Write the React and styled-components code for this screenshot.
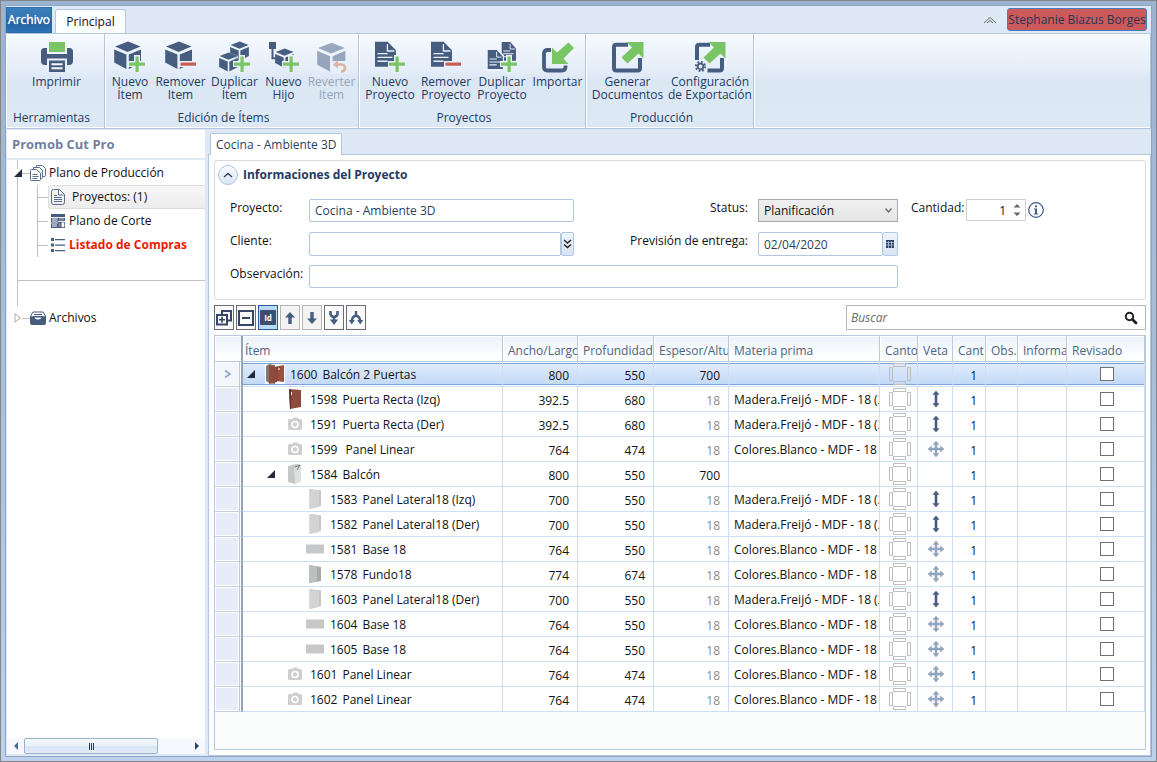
import React, { useState } from "react";
import styled, { createGlobalStyle, css } from "styled-components";

const NAVY = "#475d80";
const GREEN = "#79c464";
const RED = "#c95b57";

/* ---------- icons ---------- */

const Plus = () => (
    <g>
        <path d="M20 14h6v6h6v6h-6v6h-6v-6h-6v-6h6z" fill="#eaf1fa" />
        <path d="M21.5 15.500h3.200v6h6.300v3.200h-6.300v6.300h-3.200v-6.300h-6.500v-3.200h6.500z" fill={GREEN} />
    </g>
);

const Minus = () => (
    <g>
        <path d="M14 20h18v6h-18z" fill="#eaf1fa" />
        <path d="M15.500 21.500h15.500v3.200h-15.500z" fill={RED} />
    </g>
);

const Cube = (props) => (
    <g fill={NAVY} {...props}>
        <path d="M14 .6L26.500 5.600 13.500 11 1 5.600z" />
        <path d="M.2 8.400L12.400 13.600V28L.2 21.600z" />
        <path d="M14.800 13.600L27 8.400v13.200L14.800 28z" />
    </g>
);

const Sheet = (props) => (
    <g {...props}>
        <path d="M1 .8h12.600l8.400 8.400v16.600H1z" fill={NAVY} />
        <path d="M13.400 3v7h7" fill="none" stroke="#eaf1fa" strokeWidth="1.300" />
        <path d="M3.500 12.600h10M3.500 16.400h15M3.500 20.200h10" stroke="#eaf1fa" strokeWidth="1.400" />
    </g>
);

const ribbonDrawings = {
    print: (
        <>
            <path d="M8 1h16v10H8z" fill={GREEN} />
            <path d="M0 10.500Q0 7 3.500 7H6v6h20V7h2.500Q32 7 32 10.500v9.500q0 4-4 4h-2v-6.500H6V24H4q-4 0-4-4z" fill={NAVY} />
            <path d="M8 19.500h16V31H8z" fill={NAVY} />
            <path d="M10.500 23.200h11M10.500 27.200h11" stroke="#f2f6fc" strokeWidth="2" />
        </>
    ),
    itemNew: <><Cube /><Plus /></>,
    itemRemove: <><Cube /><Minus /></>,
    itemCopy: (
        <>
            <Cube transform="translate(11 0) scale(.7)" />
            <path d="M-1 16l10-5 10 4v16H-1z" fill="#eaf1fa" opacity=".8" />
            <Cube transform="translate(0 11) scale(.7)" />
            <Plus />
        </>
    ),
    itemChild: (
        <>
            <path d="M1 1h7v7H1z" fill={NAVY} />
            <path d="M4.500 8v9.200h4" fill="none" stroke={NAVY} strokeWidth="2" />
            <Cube transform="translate(7 7) scale(.7)" />
            <Plus />
        </>
    ),
    itemRevert: (
        <g opacity=".5">
            <Cube transform="translate(1 1) scale(1.050)" />
            <path d="M16 20h15v12H16z" fill="#eaf1fa" />
            <path d="M18 23.500h7q4 0 4 3.500t-4 3.500" fill="none" stroke="#cc7c50" strokeWidth="2.600" />
            <path d="M22 19.500l-5 4 5 4z" fill="#cc7c50" />
        </g>
    ),
    docNew: <><Sheet /><Plus /></>,
    docRemove: <><Sheet /><Minus /></>,
    docCopy: (
        <>
            <Sheet transform="translate(15 .5) scale(.68 .75)" />
            <path d="M0 8h11l7 6v16H0z" fill="#eaf1fa" />
            <Sheet transform="translate(1 8.500) scale(.72 .76)" />
            <Plus />
        </>
    ),
    importing: (
        <>
            <path d="M9 9H5.500Q2 9 2 12.500V26q0 3.500 3.500 3.500H20q3.500 0 3.500-3.500v-1.500" fill="none" stroke={NAVY} strokeWidth="3.800" />
            <path d="M10 6.500l5 5L26.500 1.500l5.500 5.500L21.500 17.500l5 5.500H10z" fill={GREEN} />
        </>
    ),
    exporting: (
        <>
            <path d="M16 3.800H4.500Q2 3.800 2 6v21q0 2.500 2.500 2.500h21q2.500 0 2.500-2.500V17" fill="none" stroke={NAVY} strokeWidth="4" />
            <path d="M14.500 1H31.500v16.500l-5-5L15.500 22.500 9.500 16.500 20 6.500z" fill={GREEN} />
        </>
    ),
    exportConfig: (
        <>
            <path d="M16 3.800H5.500Q3 3.800 3 6v13M13.500 29.500h12q2.500 0 2.500-2.500V17" fill="none" stroke={NAVY} strokeWidth="4" />
            <path d="M14.500 1H31.500v16.500l-5-5L15.500 22.500 9.500 16.500 20 6.500z" fill={GREEN} />
            <circle cx="6.500" cy="25.500" r="4.600" fill="none" stroke={NAVY} strokeWidth="2" strokeDasharray="1.800 1.800" />
            <circle cx="6.500" cy="25.500" r="2.800" fill="none" stroke={NAVY} strokeWidth="1.800" />
        </>
    ),
};

const RibbonIcon = ({ name }) => (
    <svg width="32" height="32" viewBox="0 0 32 32" aria-hidden="true">{ribbonDrawings[name]}</svg>
);

const treeDrawings = {
    plan: (
        <g fill="#fff" stroke="#5b6d90">
            <path d="M6.500.5h6l3 3v7q0 1-1 1h-7q-1 0-1-1z" />
            <path d="M3.500 2.500h6l3 3v7q0 1-1 1h-7q-1 0-1-1z" />
            <path d="M1.500 4.500h5l4 3.500v6.500q0 1-1 1h-8q-1 0-1-1v-9q0-1 1-1z" />
            <path d="M2.500 9.500h5M2.500 11.500h6M2.500 13.500h5" />
        </g>
    ),
    project: (
        <g fill="none" stroke="#5b6d90">
            <path d="M3.500.5h6l5 5v8q0 2-2 2h-9q-2 0-2-2v-11q0-2 2-2z" />
            <path d="M8.500.5v5.500h5M4 8.500h7.500M4 10.500h8M4 12.500h8M4 6.500h3" />
        </g>
    ),
    cut: (
        <g>
            <path d="M1 1h14v14H1z" fill={NAVY} />
            <path d="M2 5h5.500v4H2zM2 11h5v3H2z" fill="#a3adbe" />
            <path d="M9 5h5v2.500H9zM8.500 10.500h2v3.500h-2z" fill="#8d8793" />
            <path d="M1 4.500h14M1 10h7M8 8.500h7" stroke="#e8edf5" />
            <path d="M11.500 9.500h2.800v4.700h-2.800z" fill="#fff" />
        </g>
    ),
    list: (
        <g fill={NAVY}>
            <path d="M1 1h3v3H1zM1 6.500h3v3H1zM1 12h3v3H1z" />
            <path d="M5 2h10v1.200H5zM5 7.500h10v1.200H5zM5 13h10v1.200H5z" />
        </g>
    ),
    files: (
        <g>
            <path d="M3 2h10l3 5H0z" fill="#fff" stroke={NAVY} />
            <path d="M4 4.500h8M3 6.500h10" stroke={NAVY} />
            <path d="M0 6.500h4.500q0 3 3.500 3t3.500-3H16V13q0 2-2 2H2q-2 0-2-2z" fill={NAVY} />
        </g>
    ),
};

const TreeIcon = ({ name }) => (
    <svg width="16" height="16" viewBox="0 0 16 16" aria-hidden="true">{treeDrawings[name]}</svg>
);

const toolDrawings = {
    expand: (
        <g fill="none" stroke="#344766" strokeWidth="2">
            <path d="M6 4V1h9v9.500h-3" />
            <path d="M1 5h10v9.500H1z" />
            <path d="M3 9.800h6M6 6.800v6" strokeWidth="1.600" />
        </g>
    ),
    collapse: (
        <g fill="none" stroke="#344766" strokeWidth="2">
            <path d="M1 1h14v14H1z" />
            <path d="M4 8h8" />
        </g>
    ),
    id: <rect x="0" y="0" width="16" height="15" rx="1" fill="#3d4d70" />,
    up: <path d="M8 2l5 5.500H9.700V14H6.300V7.500H3z" fill={NAVY} />,
    down: <path d="M8 14l5-5.500H9.700V2H6.300v6.500H3z" fill={NAVY} />,
    merge: (
        <g>
            <path d="M4.500 1v2.500q0 3 3.500 3.500 3.500-.5 3.500-3.500V1M8 7v5" fill="none" stroke={NAVY} strokeWidth="2.600" />
            <path d="M3.800 9.500h8.400L8 15z" fill={NAVY} />
        </g>
    ),
    split: (
        <g>
            <path d="M8 1v5M8 5.500Q3.800 7 3.800 11M8 5.500q4.200 1.500 4.200 5.500" fill="none" stroke={NAVY} strokeWidth="2.400" />
            <path d="M.8 10h6l-3 4.500zM9.200 10h6l-3 4.500z" fill={NAVY} />
        </g>
    ),
};

const thumbs = {
    cabinet: (
        <>
            <path d="M0 0h20v20H0z" fill="#fff" />
            <path d="M1 2l3-2 6 1v19l-6-1-3-2z" fill="#7e7a70" />
            <path d="M4 1l8 2v15l-8 2z" fill="#8f4b3d" />
            <path d="M11 2.500l8-1.500v17l-8-1z" fill="#98503f" />
            <path d="M12 3v14" stroke="#7f4034" />
            <path d="M14 4v2" stroke="#fff" />
        </>
    ),
    door: (
        <>
            <path d="M4 0l12 1v17L5 20z" fill="#8f4b3d" />
            <path d="M4 0l2 1v19l-1 0z" fill="#5f3129" />
            <path d="M6.500 3v3" stroke="#fff" />
        </>
    ),
    camera: (
        <>
            <path d="M4.500 5h3l1-1.500h4L13.500 5h2q1.500 0 1.500 1.500v8q0 1.500-1.500 1.500h-11Q3 16 3 14.500v-8Q3 5 4.500 5z" fill="#cfcfcf" />
            <circle cx="10" cy="10.500" r="3" fill="#cfcfcf" stroke="#fff" strokeWidth="1.600" />
        </>
    ),
    carcass: (
        <>
            <path d="M3 2l8-2 5 1v16l-6 3-7-2z" fill="#c5c8c7" />
            <path d="M9 4l7-3v16l-6 3z" fill="#dde0df" />
            <path d="M10 3l5-2-3 5" fill="none" stroke="#777" />
        </>
    ),
    side: (
        <>
            <path d="M4.500 0L16 1.500V17L4.500 20z" fill="#c6c8c7" />
            <path d="M4.500 0L14 2v16l-9.500 2z" fill="#d2d4d3" />
        </>
    ),
    base: <path d="M1 5.500h18v9H1z" fill="#c6c7c9" />,
    back: (
        <>
            <path d="M4 1l12 2v14L4 19z" fill="#a3a9ac" />
            <path d="M4 1l8 2v14l-8 2z" fill="#bcc1bf" />
        </>
    ),
};

const EdgeBands = () => (
    <svg width="22" height="22" viewBox="0 0 22 22" aria-hidden="true">
        <path d="M4.500.5h12v3h-12zM4.500 18.500h12v3h-12zM.5 4.500h3v13h-3zM18.500 4.500h3v13h-3z" fill="none" stroke="#bdbdbd" />
    </svg>
);

const Grain = ({ dir }) => (
    <svg width="16" height="16" viewBox="0 0 16 16" aria-hidden="true">
        {dir === "v" && <path d="M8 0l3 3.500H9v9h2L8 16l-3-3.500h2v-9H5z" fill={NAVY} stroke={NAVY} strokeWidth=".6" />}
        {dir === "x" && (
            <path d="M8 0l3 3.500H9V7h3.500V5L16 8l-3.500 3V9H9v3.500h2L8 16l-3-3.500h2V9H3.500v2L0 8l3.500-3v2H7V3.500H5z" fill="#93a5bd" stroke="#93a5bd" strokeWidth=".5" />
        )}
    </svg>
);

/* ---------- data ---------- */

const ribbonGroups = [
    { title: "Herramientas", width: 98, pad: 2, left: true, items: [["print", "Imprimir", 95]] },
    {
        title: "Edición de Ítems",
        width: 254,
        pad: 1,
        items: [
            ["itemNew", "Nuevo\nÍtem", 48],
            ["itemRemove", "Remover\nItem", 53],
            ["itemCopy", "Duplicar\nÍtem", 55],
            ["itemChild", "Nuevo\nHijo", 43],
            ["itemRevert", "Reverter\nItem", 53, true],
        ],
    },
    {
        title: "Proyectos",
        width: 227,
        pad: 3,
        items: [
            ["docNew", "Nuevo\nProyecto", 56],
            ["docRemove", "Remover\nProyecto", 56],
            ["docCopy", "Duplicar\nProyecto", 56],
            ["importing", "Importar", 55],
        ],
    },
    {
        title: "Producción",
        width: 168,
        pad: 2,
        items: [
            ["exporting", "Generar\nDocumentos", 79],
            ["exportConfig", "Configuración\nde Exportación", 86],
        ],
    },
];

const FREIJO = "Madera.Freijó - MDF - 18 (2";
const BLANCO = "Colores.Blanco - MDF - 18 (";

const items = [
    { id: 1600, name: "Balcón 2 Puertas", level: 0, open: true, pic: "cabinet", w: "800", d: "550", h: "700" },
    { id: 1598, name: "Puerta Recta (Izq)", level: 1, pic: "door", w: "392.5", d: "680", h: "18", mat: FREIJO, dir: "v" },
    { id: 1591, name: "Puerta Recta (Der)", level: 1, pic: "camera", w: "392.5", d: "680", h: "18", mat: FREIJO, dir: "v" },
    { id: 1599, name: "\u00a0Panel Linear", level: 1, pic: "camera", w: "764", d: "474", h: "18", mat: BLANCO, dir: "x" },
    { id: 1584, name: "Balcón", level: 1, open: true, pic: "carcass", w: "800", d: "550", h: "700" },
    { id: 1583, name: "Panel Lateral18 (Izq)", level: 2, pic: "side", w: "700", d: "550", h: "18", mat: FREIJO, dir: "v" },
    { id: 1582, name: "Panel Lateral18 (Der)", level: 2, pic: "side", w: "700", d: "550", h: "18", mat: FREIJO, dir: "v" },
    { id: 1581, name: "Base 18", level: 2, pic: "base", w: "764", d: "550", h: "18", mat: BLANCO, dir: "x" },
    { id: 1578, name: "Fundo18", level: 2, pic: "back", w: "774", d: "674", h: "18", mat: BLANCO, dir: "x" },
    { id: 1603, name: "Panel Lateral18 (Der)", level: 2, pic: "side", w: "700", d: "550", h: "18", mat: FREIJO, dir: "v" },
    { id: 1604, name: "Base 18", level: 2, pic: "base", w: "764", d: "550", h: "18", mat: BLANCO, dir: "x" },
    { id: 1605, name: "Base 18", level: 2, pic: "base", w: "764", d: "550", h: "18", mat: BLANCO, dir: "x" },
    { id: 1601, name: "Panel Linear", level: 1, pic: "camera", w: "764", d: "474", h: "18", mat: BLANCO, dir: "x" },
    { id: 1602, name: "Panel Linear", level: 1, pic: "camera", w: "764", d: "474", h: "18", mat: BLANCO, dir: "x" },
];

const columns = [
    ["Ítem", null],
    ["Ancho/Largo", 75],
    ["Profundidad", 76],
    ["Espesor/Altu", 75],
    ["Materia prima", 151],
    ["Canto", 38],
    ["Veta", 35],
    ["Cant", 33],
    ["Obs.", 32],
    ["Informa", 49],
    ["Revisado", 78],
];

const tools = [
    ["expand", "Expandir"],
    ["collapse", "Contraer"],
    ["id", "Id"],
    ["up", "Subir"],
    ["down", "Bajar"],
    ["merge", "Unir"],
    ["split", "Separar"],
];

/* ---------- page ---------- */

const App = () => {
    const [selected, setSelected] = useState(1600);

    return (
        <Window>
            <GlobalStyle />
            <Inner>
                <TabStrip>
                    <FileTab type="button">Archivo</FileTab>
                    <MainTab type="button">Principal</MainTab>
                    <Spacer />
                    <FoldButton type="button" aria-label="Minimizar cinta">
                        <svg width="14" height="8" viewBox="0 0 14 8">
                            <path d="M1 7l6-5.500L13 7M4 7l3-2.500L10 7" fill="none" stroke="#666" />
                        </svg>
                    </FoldButton>
                    <UserButton type="button">Stephanie Biazus Borges</UserButton>
                </TabStrip>

                <Ribbon>
                    {ribbonGroups.map((group) => (
                        <Group key={group.title} $width={group.width}>
                            <GroupButtons $pad={group.pad}>
                                {group.items.map(([icon, label, width, off]) => (
                                    <RibbonButton key={icon} type="button" $width={width} disabled={off}>
                                        <RibbonIcon name={icon} />
                                        <span>{label}</span>
                                    </RibbonButton>
                                ))}
                            </GroupButtons>
                            <GroupTitle $left={group.left}>{group.title}</GroupTitle>
                        </Group>
                    ))}
                </Ribbon>

                <Body>
                    <Side>
                        <SideTitle>Promob Cut Pro</SideTitle>
                        <Tree>
                            <TreeSection>
                                <TreeNode href="#plano">
                                    <Opener width="8" height="8" viewBox="0 0 8 8"><path d="M8 0v8H0z" fill="#262f42" /></Opener>
                                    <Dash />
                                    <TreeIcon name="plan" />
                                    <span>Plano de Producción</span>
                                </TreeNode>
                                <Branch>
                                    <BranchRow>
                                        <Dash $wide />
                                        <TreeLink href="#proyectos" $active><TreeIcon name="project" /><span>Proyectos: (1)</span></TreeLink>
                                    </BranchRow>
                                    <BranchRow>
                                        <Dash $wide />
                                        <TreeLink href="#corte"><TreeIcon name="cut" /><span>Plano de Corte</span></TreeLink>
                                    </BranchRow>
                                    <BranchRow>
                                        <Dash $wide />
                                        <TreeLink href="#compras" $alert><TreeIcon name="list" /><span>Listado de Compras</span></TreeLink>
                                    </BranchRow>
                                </Branch>
                            </TreeSection>
                            <TreeSpace />
                            <TreeNode href="#archivos">
                                <Opener width="8" height="10" viewBox="0 0 8 10"><path d="M1 .8v8.400L6.500 5z" fill="#fff" stroke="#aaa" /></Opener>
                                <Dash />
                                <TreeIcon name="files" />
                                <span>Archivos</span>
                            </TreeNode>
                        </Tree>
                        <ScrollBar>
                            <ScrollArrow type="button" aria-label="Izquierda">
                                <svg width="4" height="8" viewBox="0 0 4 8"><path d="M4 0v8L0 4z" fill="#4a6a98" /></svg>
                            </ScrollArrow>
                            <Thumb><i /><i /><i /></Thumb>
                            <Spacer />
                            <ScrollArrow type="button" aria-label="Derecha">
                                <svg width="4" height="8" viewBox="0 0 4 8"><path d="M0 0v8l4-4z" fill="#2c4470" /></svg>
                            </ScrollArrow>
                        </ScrollBar>
                    </Side>

                    <Main>
                        <DocTabs>
                            <DocTab type="button">Cocina - Ambiente 3D</DocTab>
                        </DocTabs>
                        <Document>
                            <Info>
                                <InfoHead>
                                    <RoundButton type="button" aria-label="Contraer información">
                                        <svg width="10" height="6" viewBox="0 0 10 6"><path d="M1 5l4-3.500L9 5" fill="none" stroke="#2f4266" strokeWidth="1.400" /></svg>
                                    </RoundButton>
                                    <h2>Informaciones del Proyecto</h2>
                                </InfoHead>
                                <Form>
                                    <Label htmlFor="proyecto">Proyecto:</Label>
                                    <TextInput id="proyecto" defaultValue="Cocina - Ambiente 3D" />
                                    <Label htmlFor="status" $right>Status:</Label>
                                    <SelectBox>
                                        <select id="status" defaultValue="Planificación">
                                            <option>Planificación</option>
                                            <option>Producción</option>
                                        </select>
                                        <svg width="7" height="5" viewBox="0 0 7 5"><path d="M.5.5l3 3.500 3-3.500" fill="none" stroke="#666" strokeWidth="1.200" /></svg>
                                    </SelectBox>
                                    <Amount>
                                        <Label htmlFor="cantidad">Cantidad:</Label>
                                        <Spinner>
                                            <input id="cantidad" type="text" inputMode="numeric" defaultValue="1" />
                                            <svg width="8" height="14" viewBox="0 0 8 14"><path d="M4 1l3.500 3.500h-7zM4 13l3.500-3.500h-7z" fill="#666" /></svg>
                                        </Spinner>
                                        <svg width="16" height="16" viewBox="0 0 16 16" aria-hidden="true">
                                            <circle cx="8" cy="8" r="7.300" fill="#fff" stroke="#415a88" strokeWidth="1.200" />
                                            <path d="M7 3.500h2v1.800H7zM6 6.500h3v5h1.200v1H5.800v-1H7v-4H6z" fill="#415a88" />
                                        </svg>
                                    </Amount>

                                    <Label htmlFor="cliente">Cliente:</Label>
                                    <Joined>
                                        <TextInput id="cliente" />
                                        <SmallButton type="button" aria-label="Buscar cliente">
                                            <svg width="9" height="10" viewBox="0 0 9 10"><path d="M1 1l3.500 3L8 1M1 5.500l3.500 3 3.500-3" fill="none" stroke="#222" strokeWidth="1.500" /></svg>
                                        </SmallButton>
                                    </Joined>
                                    <Label htmlFor="entrega" $right>Previsión de entrega:</Label>
                                    <Joined>
                                        <TextInput id="entrega" defaultValue="02/04/2020" />
                                        <SmallButton type="button" $wide aria-label="Abrir calendario">
                                            <svg width="8" height="8" viewBox="0 0 8 8"><path d="M0 0h8v8H0z" fill="#2d4268" /><path d="M0 2.500h8M0 5h8M2.500 1v7M5.500 1v7" stroke="#dde7f5" strokeWidth=".6" /></svg>
                                        </SmallButton>
                                    </Joined>
                                    <span />

                                    <Label htmlFor="observacion">Observación:</Label>
                                    <WideCell><TextInput id="observacion" /></WideCell>
                                </Form>
                            </Info>

                            <ToolRow>
                                {tools.map(([name, label]) => (
                                    <ToolButton key={name} type="button" title={label} $on={name === "id"} $dim={name === "up" || name === "down"}>
                                        <svg width="16" height="16" viewBox="0 0 16 16" aria-hidden="true">{toolDrawings[name]}</svg>
                                        {name === "id" && <b>Id</b>}
                                    </ToolButton>
                                ))}
                                <Spacer />
                                <Search>
                                    <input type="text" placeholder="Buscar" aria-label="Buscar" />
                                    <svg width="14" height="14" viewBox="0 0 14 14" aria-hidden="true">
                                        <circle cx="5.500" cy="5.500" r="3.700" fill="none" stroke="#222" strokeWidth="2" />
                                        <path d="M8.500 8.500l3.500 3.500" stroke="#222" strokeWidth="2.800" strokeLinecap="round" />
                                    </svg>
                                </Search>
                            </ToolRow>

                            <GridBox>
                                <Table>
                                    <colgroup>
                                        <Col $width={28} />
                                        {columns.map(([name, width]) => <Col key={name} $width={width} />)}
                                    </colgroup>
                                    <thead>
                                        <tr>
                                            <Corner />
                                            {columns.map(([name], i) => <Th key={name} scope="col" $first={i === 0}><div>{name}</div></Th>)}
                                        </tr>
                                    </thead>
                                    <tbody>
                                        {items.map((it) => {
                                            const on = it.id === selected;
                                            return (
                                                <Row key={it.id} $on={on} onClick={() => setSelected(it.id)}>
                                                    <Handle>
                                                        {on && <svg width="8" height="8" viewBox="0 0 8 8"><path d="M1 .5l5 3.500-5 3.500" fill="none" stroke="#8aa6cc" strokeWidth="1.600" /></svg>}
                                                    </Handle>
                                                    <Td>
                                                        <Name $level={it.level}>
                                                            <svg width="18" height="8" viewBox="0 0 18 8">{it.open && <path d="M8 0v8H0z" fill="#222a3a" />}</svg>
                                                            <svg width="20" height="20" viewBox="0 0 20 20">{thumbs[it.pic]}</svg>
                                                            <span>{it.id}</span>
                                                            <span>{it.name}</span>
                                                        </Name>
                                                    </Td>
                                                    <Td $num>{it.w}</Td>
                                                    <Td $num>{it.d}</Td>
                                                    <Td $num $faint={it.h === "18"}>{it.h}</Td>
                                                    <Td><Clip>{it.mat}</Clip></Td>
                                                    <Td $center><EdgeBands /></Td>
                                                    <Td $center><Grain dir={it.dir} /></Td>
                                                    <Td $num>1</Td>
                                                    <Td />
                                                    <Td />
                                                    <Td $center><Check type="checkbox" aria-label={"Revisado " + it.id} /></Td>
                                                </Row>
                                            );
                                        })}
                                    </tbody>
                                </Table>
                            </GridBox>
                        </Document>
                    </Main>
                </Body>
            </Inner>
        </Window>
    );
};

const GlobalStyle = createGlobalStyle`
    * {
        box-sizing: border-box;
    }

    body {
        margin: 0;
    }

    body, button, input, select {
        font-family: "Open Sans", "Noto Sans", sans-serif;
        font-size: 12px;
        line-height: 16px;
        color: #111;
    }

    button {
        margin: 0;
        padding: 0;
        cursor: pointer;
    }

    svg {
        display: block;
        flex: none;
    }
`;

const Window = styled.div`
    display: flex;
    min-height: 100vh;
    padding: 4px;
    border: 1px solid #858585;
    background: linear-gradient(#9ab3d1, #a9c0dd 50%, #bbd1ee);
`;

const Inner = styled.div`
    display: flex;
    flex-direction: column;
    flex: 1;
    min-width: 0;
    border: 1px solid #8fa5c4;
    background: #dfe8f5;
`;

const Spacer = styled.div`
    flex: 1;
`;

const TabStrip = styled.div`
    display: flex;
    align-items: flex-end;
    height: 27px;
    padding-right: 4px;
`;

const FileTab = styled.button`
    width: 46px;
    height: 26px;
    border: 1px solid #2d6ba8;
    background: linear-gradient(#3c7fbd, #2f72b1 50%, #1e5c9c 50%, #2f74b6);
    color: #fff;
    text-shadow: 0 0 1px #fff;
`;

const MainTab = styled.button`
    width: 71px;
    height: 24px;
    margin-left: 3px;
    border: 1px solid #b5c9e2;
    border-bottom: 0;
    border-radius: 3px 3px 0 0;
    background: #fdfeff;
`;

const FoldButton = styled.button`
    display: flex;
    align-self: center;
    margin-right: 10px;
    border: 0;
    background: none;
`;

const UserButton = styled.button`
    align-self: center;
    width: 140px;
    height: 23px;
    border: 1px solid #4a7ebb;
    border-radius: 3px;
    background: #cd5a5a;
    color: #2b3358;
    white-space: nowrap;
`;

const Ribbon = styled.div`
    display: flex;
    height: 96px;
    border: 1px solid #b3c5dc;
    border-left-color: #fff;
    box-shadow: inset 0 1px #fff, inset 0 -1px #fff;
    background: linear-gradient(#f6faff, #e6eef9 35%, #dce7f4 50%, #dde8f5);
`;

const Group = styled.div`
    display: flex;
    flex-direction: column;
    width: ${(p) => p.$width}px;
    border-right: 1px solid #b3c5dc;
    box-shadow: 1px 0 #fff;
`;

const GroupButtons = styled.div`
    display: flex;
    flex: 1;
    padding: 7px 0 0 ${(p) => p.$pad}px;
`;

const RibbonButton = styled.button`
    display: flex;
    flex-direction: column;
    align-items: center;
    gap: 2px;
    width: ${(p) => p.$width}px;
    border: 0;
    background: none;
    color: #233a63;
    line-height: 13px;
    white-space: pre;

    &:disabled {
        color: #96a4b8;
    }

    span {
        display: block;
    }
`;

const GroupTitle = styled.div`
    padding: ${(p) => (p.$left ? "0 6px 2px" : "0 16px 2px 0")};
    color: #233a63;
    text-align: ${(p) => (p.$left ? "left" : "center")};
`;

const Body = styled.div`
    display: flex;
    flex: 1;
    gap: 3px;
    min-height: 0;
`;

const Side = styled.aside`
    display: flex;
    flex-direction: column;
    width: 199px;
    margin: 1px 0 2px;
    padding-left: 1px;
`;

const SideTitle = styled.h1`
    margin: 0 0 2px;
    padding: 5px;
    background: #fff;
    color: #717f9f;
    font-size: 13px;
    line-height: 18px;
`;

const Tree = styled.nav`
    flex: 1;
    background: #fff;
`;

const TreeSection = styled.div`
    height: 121px;
    margin-left: 10px;
    padding-top: 1px;
    border-left: 1px solid #c2c2c2;
    border-bottom: 1px solid #c2c2c2;

    > a {
        margin-left: -11px;
    }
`;

const TreeSpace = styled.div`
    height: 25px;
    margin-left: 10px;
    border-left: 1px solid #c2c2c2;
`;

const TreeNode = styled.a`
    display: flex;
    align-items: center;
    height: 24px;
    padding-left: 7px;
    color: #111;
    text-decoration: none;

    span:last-child {
        margin-left: 3px;
    }
`;

const Opener = styled.svg`
    background: #fff;
`;

const Dash = styled.i`
    width: ${(p) => (p.$wide ? 10 : 8)}px;
    border-top: 1px solid #c2c2c2;
`;

const Branch = styled.div`
    margin-left: 19px;
    border-left: 1px solid #c2c2c2;
`;

const BranchRow = styled.div`
    display: flex;
    align-items: center;
    height: 24px;
`;

const TreeLink = styled.a`
    display: flex;
    align-items: center;
    flex: 1;
    gap: 3px;
    height: 24px;
    padding-left: 1px;
    border: 1px solid transparent;
    color: #111;
    text-decoration: none;
    white-space: nowrap;

    ${(p) => p.$active && css`
        gap: 6px;
        border-color: #dcdcdc;
        border-right: 0;
        border-radius: 3px 0 0 3px;
        background: linear-gradient(#f6f6f6, #ececec);
    `}

    ${(p) => p.$alert && css`
        color: #ea1c00;
        font-weight: bold;
    `}
`;

const ScrollBar = styled.div`
    display: flex;
    align-items: center;
    height: 16px;
    background: #f6f8fe;
`;

const ScrollArrow = styled.button`
    display: flex;
    justify-content: center;
    width: 17px;
    border: 0;
    background: none;
`;

const Thumb = styled.div`
    display: flex;
    align-items: center;
    justify-content: center;
    gap: 1px;
    width: 134px;
    height: 16px;
    border: 1px solid #9ab2cf;
    border-radius: 2px;
    background: linear-gradient(#f4f8fe, #e9f1fa 50%, #d8e4f2 50%, #e3ecf7);

    i {
        width: 1px;
        height: 7px;
        background: #243a66;
    }
`;

const Main = styled.main`
    display: flex;
    flex-direction: column;
    flex: 1;
    min-width: 0;
    padding-top: 4px;
`;

const DocTabs = styled.div`
    display: flex;
    padding-left: 2px;
`;

const DocTab = styled.button`
    height: 22px;
    margin-bottom: -1px;
    padding: 0 4px 0 5px;
    border: 1px solid #b3c7e0;
    border-bottom: 0;
    border-radius: 2px 2px 0 0;
    background: #fff;
    color: #2a3f60;
    z-index: 1;
`;

const Document = styled.div`
    display: flex;
    flex-direction: column;
    flex: 1;
    gap: 5px;
    padding: 5px 4px 5px 5px;
    border: 1px solid #b3c7e0;
    background: #fff;
`;

const Info = styled.section`
    padding-bottom: 10px;
    border: 1px solid #dadada;
    border-radius: 3px;
`;

const InfoHead = styled.div`
    display: flex;
    align-items: center;
    gap: 5px;
    height: 28px;
    padding-left: 3px;

    h2 {
        margin: 0;
        color: #243a63;
        font-size: 12px;
    }
`;

const RoundButton = styled.button`
    display: flex;
    align-items: center;
    justify-content: center;
    width: 20px;
    height: 20px;
    border: 1px solid #b0c4de;
    border-radius: 50%;
    background: linear-gradient(#f8fbff, #d9e5f4);
`;

const Form = styled.div`
    display: grid;
    grid-template-columns: 79px 265px 184px 140px 1fr;
    grid-auto-rows: 24px;
    gap: 9px 0;
    align-items: start;
    padding: 10px 15px 0;
`;

const Label = styled.label`
    line-height: 18px;
    white-space: nowrap;
    ${(p) => p.$right && "text-align: right; padding-right: 10px;"}
`;

const TextInput = styled.input`
    width: 100%;
    min-width: 0;
    height: 23px;
    padding: 0 5px;
    border: 1px solid #b0c6e2;
    border-radius: 2px;
    background: #fff;
    color: #2b3f5c;
    outline: 0;
`;

const Joined = styled.div`
    display: flex;
    height: 24px;

    > * {
        height: 24px;
    }
`;

const SmallButton = styled.button`
    display: flex;
    align-items: center;
    justify-content: center;
    flex: none;
    width: ${(p) => (p.$wide ? 15 : 13)}px;
    border: 1px solid #b0c6e2;
    border-left-width: ${(p) => (p.$wide ? 0 : 1)}px;
    border-radius: 2px;
    background: linear-gradient(#f0f5fc, #d8e4f3);
`;

const WideCell = styled.div`
    grid-column: 2 / 5;
`;

const SelectBox = styled.div`
    display: grid;
    align-items: center;

    > * {
        grid-area: 1 / 1;
    }

    select {
        height: 23px;
        padding: 0 5px;
        border: 1px solid #acacac;
        border-radius: 0;
        background: linear-gradient(#f0f0f0, #e5e5e5);
        appearance: none;
    }

    svg {
        justify-self: end;
        margin-right: 6px;
        pointer-events: none;
    }
`;

const Amount = styled.div`
    display: flex;
    gap: 2px;
    padding-left: 13px;

    label {
        width: 53px;
    }

    > svg {
        margin-top: 3px;
    }
`;

const Spinner = styled.div`
    display: flex;
    align-items: center;
    width: 60px;
    height: 22px;
    padding-right: 4px;
    border: 1px solid #cfcfcf;

    input {
        width: 46px;
        height: 20px;
        padding: 1px 7px 0 0;
        border: 0;
        background: none;
        text-align: right;
        outline: 0;
    }
`;

const ToolRow = styled.div`
    display: flex;
    gap: 2px;
    height: 25px;
`;

const ToolButton = styled.button`
    display: grid;
    place-items: center;
    width: 20px;
    height: 25px;
    border: 1px solid #6d6d74;
    background: #fafafa;

    > * {
        grid-area: 1 / 1;
    }

    b {
        color: #fff;
        font-size: 8px;
        line-height: 10px;
    }

    ${(p) => p.$dim && "border-color: #b5b5b5; background: #f3f3f3;"}
    ${(p) => p.$on && "border-color: #2c5a94; background: #b7dbf5;"}
`;

const Search = styled.div`
    display: flex;
    align-items: center;
    width: 300px;
    padding-right: 7px;
    border: 1px solid #b6bcbc;

    input {
        flex: 1;
        min-width: 0;
        padding: 0 4px;
        border: 0;
        background: none;
        outline: 0;
    }

    input::placeholder {
        color: #6d6d6d;
        font-style: italic;
    }
`;

const GridBox = styled.div`
    flex: 1;
    border: 1px solid #b9c9de;
    background: #fbfdfd;
`;

const Table = styled.table`
    width: 100%;
    table-layout: fixed;
    border-collapse: separate;
    border-spacing: 0;
`;

const Col = styled.col`
    ${(p) => p.$width && `width: ${p.$width}px;`}
`;

const headFill = css`
    height: 26px;
    border-right: 1px solid #b9c9de;
    border-bottom: 1px solid #b9c9de;
    background: linear-gradient(#ebf2fb, #fbfdff 70%, #fff);
    box-shadow: inset 1px 1px #fff;
`;

const Corner = styled.td`
    ${headFill}
    border-right: 2px solid #93a3ba;
    padding: 0;
`;

const Th = styled.th`
    ${headFill}
    padding: ${(p) => (p.$first ? "4px 2px 0" : "4px 0 0 5px")};
    color: #4d6384;
    font-weight: normal;
    text-align: left;

    div {
        overflow: hidden;
        white-space: nowrap;
    }
`;

const Handle = styled.th`
    height: 25px;
    padding: 0;
    border-right: 2px solid #93a3ba;
    border-bottom: 1px solid #c3cfe1;
    background: #e6edf9;
    box-shadow: inset -1px 0 #fff, inset -2px 0 #b9c9de, inset -3px 0 #fff, inset 0 1px #fff, inset 1px -1px #fff;

    svg {
        margin-left: 9px;
    }
`;

const Td = styled.td`
    height: 25px;
    padding: 0;
    border-right: 1px solid #cddff4;
    border-bottom: 1px solid #cddff4;
    color: ${(p) => (p.$faint ? "#8b8b8b" : "#111")};

    ${(p) => p.$num && "padding: 4px 8px 0 0; text-align: right;"}
    ${(p) => p.$center && "padding-left: 2px; > * { margin: 0 auto; }"}
`;

const Row = styled.tr`
    background: #fff;

    ${(p) => p.$on && css`
        ${Td} {
            background: linear-gradient(#fff 1px, #7da4d6 1px, #7da4d6 2px, #dfebfb 2px, #c3daf7 22px, #7da4d6 22px, #7da4d6 23px, #fff 23px);
        }

        ${Handle} {
            background: #f3f7fd;
        }
    `}
`;

const Name = styled.div`
    display: flex;
    align-items: center;
    padding-left: ${(p) => 4 + p.$level * 20}px;
    white-space: nowrap;

    span {
        margin-left: 5px;
        padding-top: 2px;
    }
`;

const Clip = styled.div`
    padding: 2px 0 0 5px;
    overflow: hidden;
    white-space: nowrap;
`;

const Check = styled.input`
    display: block;
    width: 14px;
    height: 14px;
    border: 1px solid #707070;
    background: #fff;
    appearance: none;

    &:checked {
        background: #3c7fbd;
    }
`;

export default App;
